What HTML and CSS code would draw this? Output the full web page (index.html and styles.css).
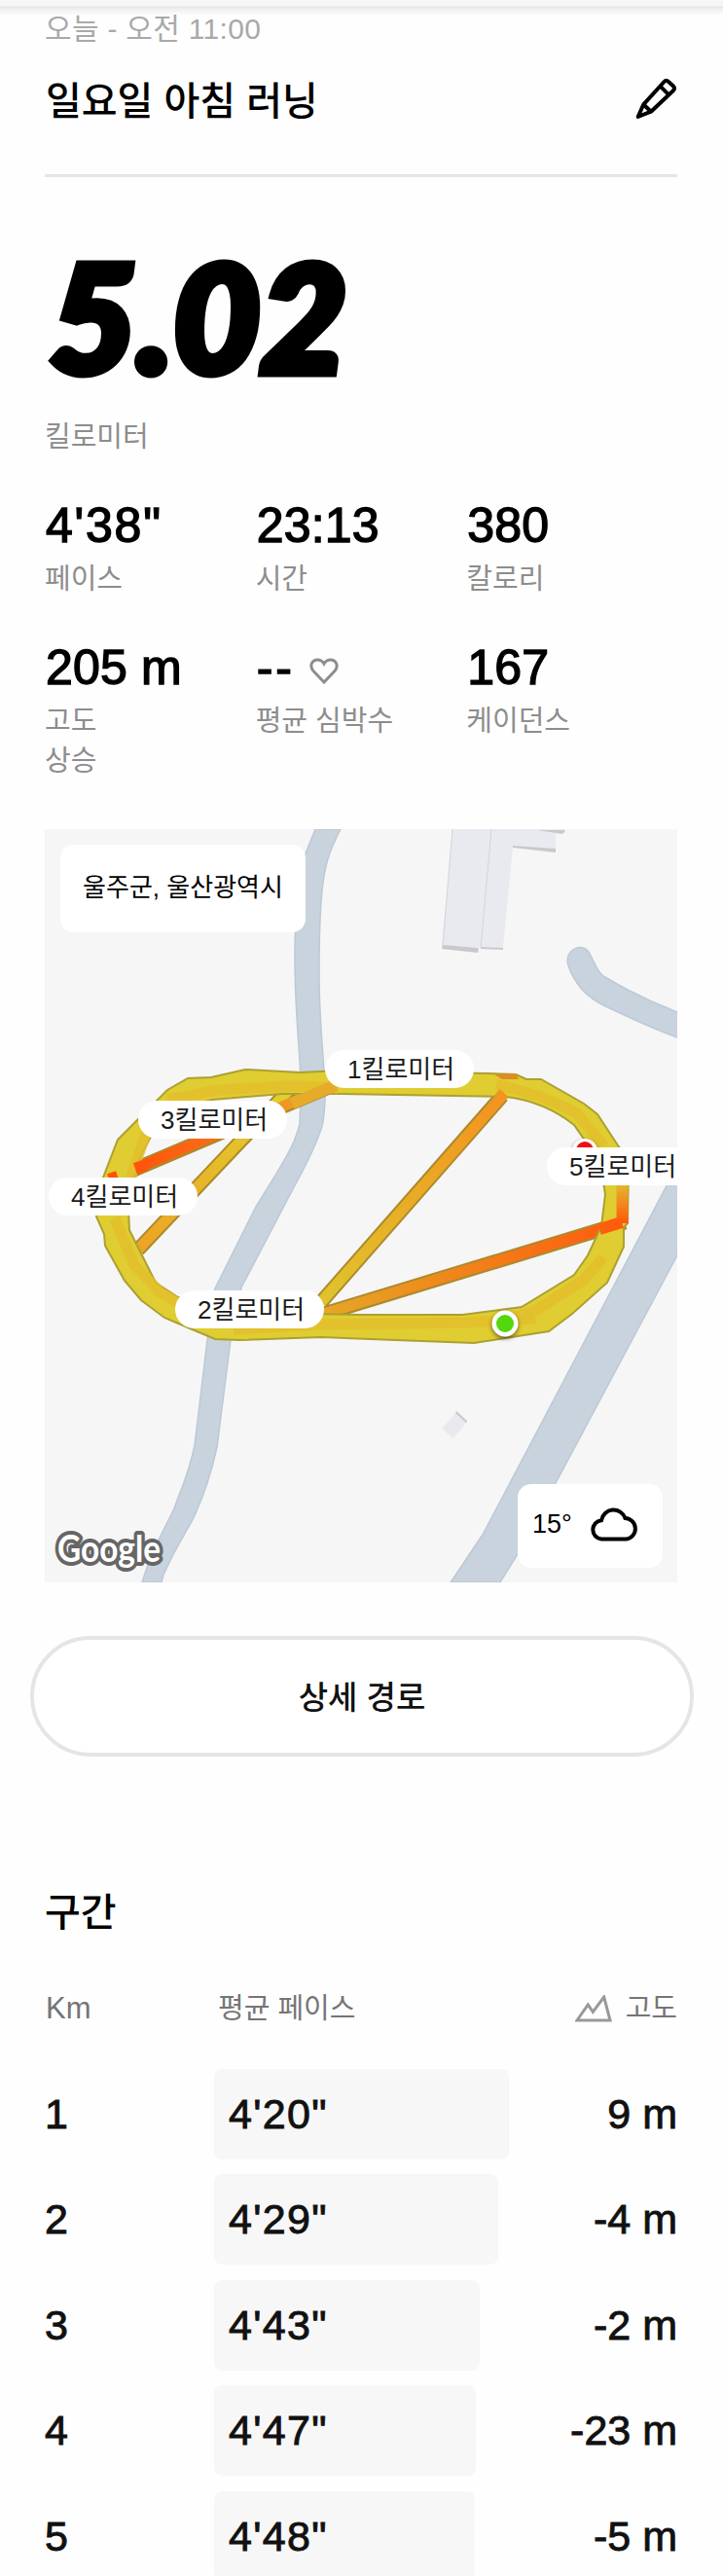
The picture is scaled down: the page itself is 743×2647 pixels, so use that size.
FILE: index.html
```
<!DOCTYPE html>
<html lang="ko">
<head>
    <meta charset="UTF-8">
    <meta name="viewport" content="width=device-width, initial-scale=1.0">
    <title>일요일 아침 러닝</title>
    <link rel="stylesheet" href="styles.css">
</head>
<body>
    <div class="top-bar"></div>
    <main class="container">
        <p class="date">오늘 - 오전 11:00</p>
        <header class="title-row">
            <h1>일요일 아침 러닝</h1>
            <svg class="edit-icon" viewBox="0 0 44 44">
                <path d="M3.700 40 L9.300 27.300 L30.500 4 Q32.700 1.500 35 4 L40 8.500 Q42 10.700 40 13 L17 34.700 Z M26.300 8.300 L35.300 17.300 M9.300 27.300 L17 34.700"/>
            </svg>
        </header>

        <section class="distance">
            <svg class="distance-value" viewBox="0 0 330 130">
                <text x="5" y="118.500" textLength="306" lengthAdjust="spacingAndGlyphs">5.02</text>
            </svg>
            <p class="label">킬로미터</p>
        </section>

        <section class="stats">
            <div class="stat">
                <div class="value pace">4'38"</div>
                <div class="label">페이스</div>
            </div>
            <div class="stat">
                <div class="value">23:13</div>
                <div class="label">시간</div>
            </div>
            <div class="stat">
                <div class="value">380</div>
                <div class="label">칼로리</div>
            </div>
            <div class="stat">
                <div class="value">205 m</div>
                <div class="label">고도<br>상승</div>
            </div>
            <div class="stat">
                <div class="value heart-rate">--
                    <svg class="heart-icon" viewBox="0 0 30 27">
                        <path d="M15 25 L4.500 14 C-1 8 3 2 8.500 2 C11.500 2 13.500 3.500 15 6 C16.500 3.500 18.500 2 21.500 2 C27 2 31 8 25.500 14 Z"/>
                    </svg>
                </div>
                <div class="label">평균 심박수</div>
            </div>
            <div class="stat">
                <div class="value">167</div>
                <div class="label">케이던스</div>
            </div>
        </section>

        <section class="map">
            <svg class="map-canvas" viewBox="46 852 650 774">
                <defs>
                    <linearGradient id="pace-a" gradientUnits="userSpaceOnUse" x1="517" y1="1125" x2="330" y2="1345">
                        <stop offset="0" stop-color="#f39320"/>
                        <stop offset="1" stop-color="#dfc42d"/>
                    </linearGradient>
                    <linearGradient id="pace-b" gradientUnits="userSpaceOnUse" x1="640" y1="1256" x2="330" y2="1350">
                        <stop offset="0" stop-color="#ff5a0d"/>
                        <stop offset="1" stop-color="#e5a727"/>
                    </linearGradient>
                    <linearGradient id="pace-c" gradientUnits="userSpaceOnUse" x1="135" y1="1203" x2="345" y2="1115">
                        <stop offset="0" stop-color="#ff5208"/>
                        <stop offset="0.45" stop-color="#f8701a"/>
                        <stop offset="1" stop-color="#e4b52b"/>
                    </linearGradient>
                    <linearGradient id="pace-d" gradientUnits="userSpaceOnUse" x1="300" y1="1125" x2="142" y2="1284">
                        <stop offset="0" stop-color="#dfd02f"/>
                        <stop offset="1" stop-color="#eda325"/>
                    </linearGradient>
                    <linearGradient id="pace-e" gradientUnits="userSpaceOnUse" x1="0" y1="1218" x2="0" y2="1256">
                        <stop offset="0" stop-color="#e5b52d"/>
                        <stop offset="1" stop-color="#ff5a0d"/>
                    </linearGradient>
                </defs>

                <!-- 하천 -->
                <g class="water">
                    <path d="M324 852 L314 877 C306 905 303 935 303 985 C303 1050 310 1090 309 1125 L308 1155 Q307 1160 302 1173 C295 1190 275 1220 263 1240 L221 1324 L213 1377 L200 1485 C194 1515 186 1530 179 1550 C167 1575 155 1595 146 1626 L166 1626 L168 1618 C185 1580 195 1570 201 1555 C210 1535 218 1510 223 1487 L237 1377 L248 1323 L302 1220 C313 1200 323 1180 329 1163 Q333 1155 334 1130 C334 1090 328 1060 328 1000 C328 960 329 935 331 915 C334 885 340 872 350 852 Z"/>
                    <path d="M710 1046 L696 1040 C670 1030 640 1015 620 1003 C612 997 609 983 604 977 C598 970 583 974 583 988 C585 998 589 1004 593 1010 C600 1021 610 1028 622 1034 C645 1045 670 1057 696 1066 L710 1072 Z"/>
                    <path d="M710 1171 L496 1577 L463 1626 L514 1626 L532 1597 L696 1290 L710 1265 Z"/>
                </g>

                <!-- 건물 -->
                <g class="building">
                    <path d="M465 852 L581 852 L581 856 L571 856 L571 872 L527 870 L517 974 L454 972 Z"/>
                    <path class="shade" d="M455 971 L492 974 L491 979 L454 975 Z M494 973 L517 974 L517 976 L494 975 Z M527 869 L571 872 L571 876 L527 871 Z M552 853 L581 853 L578 857 Z"/>
                    <path class="edge" d="M465 852 L455 972 M505 852 L494 974"/>
                    <path d="M469 1451 L480 1461 L466 1478 L454 1468 Z"/>
                    <path class="shade" d="M469 1450 L480 1460 L479 1462 L468 1452 Z"/>
                </g>

                <!-- 러닝 경로 -->
                <g class="cross-track">
                    <path class="outline" d="M142 1284 L297 1120 M135 1203 L345 1114 M516 1126 L330 1338 M330 1351 L642 1256"/>
                    <path stroke="url(#pace-d)" d="M140 1286 L297 1120"/>
                    <path stroke="url(#pace-c)" d="M110 1213 L345 1114"/>
                    <path stroke="url(#pace-a)" d="M518 1124 L330 1338"/>
                    <path stroke="url(#pace-b)" d="M326 1352 L642 1256"/>
                </g>
                <path class="loop" fill-rule="evenodd" d="M252 1099 L308 1102 L350 1100 L500 1103 L530 1104 L541 1109 L556 1109 L600 1134 L614 1145 L635 1177 L646 1192 L645 1257 L641 1261 L641 1281 L624 1318 L588 1350 L564 1368 L487 1380 L380 1376 L330 1374 L246 1377 L221 1376 L195 1365 L169 1354 L145 1336 L128 1316 L108 1280 L107 1268 L99 1250 L106 1210 L121 1171 L140 1152 L172 1120 L193 1108 L217 1107 Z M218 1130 L290 1124 L350 1124 L520 1127 Q560 1132 590 1156 L608 1182 L620 1215 L622 1227 L618 1260 L604 1290 L590 1310 L536 1343 L475 1351 L370 1351 L320 1350 L240 1357 L183 1333 L160 1318 L146 1290 L133 1264 L132 1243 L141 1195 L155 1168 L181 1140 Z"/>
                <g class="pace-band">
                    <path d="M172 1130 L225 1120 L300 1116 L348 1118"/>
                    <path d="M150 1165 L136 1205 L128 1240"/>
                    <path d="M118 1252 L138 1300 L165 1328 L195 1346"/>
                    <path d="M510 1114 L556 1127 L592 1143 L621 1178"/>
                    <path d="M620 1292 L600 1315 L550 1347 L520 1355"/>
                    <path d="M240 1366 L330 1361 L480 1359 L550 1355"/>
                </g>
                <path class="spot" stroke="url(#pace-c)" d="M139 1201 L150 1197 M112 1212 L121 1209"/>
                <path class="spot" stroke="url(#pace-b)" d="M616 1263 L639 1256"/>
                <path class="spot" stroke="url(#pace-e)" d="M639.500 1217 L639.600 1257"/>
                <path class="spot" stroke="#e5ab29" d="M300 1134 L345 1115"/>
                <path fill="#e08b25" d="M508 1104 L530 1103 L533 1109 L516 1109 Z"/>
                <path class="spot" stroke="url(#pace-a)" d="M518 1123 L512 1130"/>

                <circle class="marker" cx="601" cy="1183" r="13"/>
                <circle fill="#f00d18" cx="601" cy="1182" r="9"/>
                <circle class="marker" cx="519" cy="1360" r="13.500"/>
                <circle fill="#52d80c" cx="519" cy="1360" r="9"/>

                <text class="google" x="59" y="1605" textLength="106" lengthAdjust="spacingAndGlyphs">Google</text>
            </svg>
            <div class="place">울주군, 울산광역시</div>
            <span class="pin km1">1킬로미터</span>
            <span class="pin km2">2킬로미터</span>
            <span class="pin km3">3킬로미터</span>
            <span class="pin km4">4킬로미터</span>
            <span class="pin km5">5킬로미터</span>
            <div class="weather">
                <span>15°</span>
                <svg class="cloud-icon" viewBox="0 0 50 36">
                    <path d="M12 33.500 A9.700 9.700 0 0 1 12 14.200 A12.700 12.700 0 0 1 36.500 12 A10.800 10.800 0 0 1 37.500 33.500 Z"/>
                </svg>
            </div>
        </section>

        <button class="route-button">상세 경로</button>

        <section class="splits">
            <h2>구간</h2>
            <div class="split-head">
                <span class="km-head">Km</span>
                <span>평균 페이스</span>
                <span class="elevation-head">
                    <svg class="mountain-icon" viewBox="0 0 38 28">
                        <path d="M2 26 L13.300 10 L18.300 17.300 L29.700 2 L36 26 Z"/>
                    </svg>
                    고도
                </span>
            </div>
            <div class="split"><span>1</span><div class="track"><div class="bar" style="width: 303px">4'20"</div></div><span>9 m</span></div>
            <div class="split"><span>2</span><div class="track"><div class="bar" style="width: 292px">4'29"</div></div><span>-4 m</span></div>
            <div class="split"><span>3</span><div class="track"><div class="bar" style="width: 273px">4'43"</div></div><span>-2 m</span></div>
            <div class="split"><span>4</span><div class="track"><div class="bar" style="width: 269px">4'47"</div></div><span>-23 m</span></div>
            <div class="split"><span>5</span><div class="track"><div class="bar" style="width: 268px">4'48"</div></div><span>-5 m</span></div>
        </section>
    </main>
</body>
</html>
```

FILE: styles.css
```
* {
    box-sizing: border-box;
}
body {
    margin: 0;
    height: 2647px;
    overflow: hidden;
    background-color: #fefefe;
    color: #000;
    font-family: "Liberation Sans", "Noto Sans CJK KR", sans-serif;
}
h1, h2, p {
    margin: 0;
}
svg {
    display: block;
}
.top-bar {
    height: 16px;
    background: linear-gradient(#f7f7f7 0, #f6f6f6 6px, #e6e6e6 7px, #f1f1f1 10px, #fefefe 16px);
}
.container {
    padding: 0 47px 0 46px;
}
.date {
    height: 24px;
    line-height: 28px;
    font-size: 30px;
    letter-spacing: 0.3px;
    color: #a9a9a9;
}
.title-row {
    display: flex;
    justify-content: space-between;
    align-items: center;
    height: 142px;
    padding-bottom: 12px;
    border-bottom: 3px solid #e5e5e5;
}
h1, h2 {
    font-size: 40px;
    font-weight: 500;
    line-height: 60px;
}
h1 {
    padding-left: 1px;
}
.edit-icon {
    width: 44px;
    height: 44px;
    margin-bottom: 3px;
    fill: none;
    stroke: #000;
    stroke-width: 4;
    stroke-linejoin: round;
}
.distance {
    padding-top: 82px;
}
.distance-value {
    width: 330px;
    height: 130px;
    overflow: visible;
}
.distance-value text {
    font-family: Lato, sans-serif;
    font-size: 152px;
    font-weight: 900;
    font-style: italic;
    stroke: #000;
    stroke-width: 9;
}
.label {
    font-size: 29px;
    line-height: 41px;
    color: #8d8d8d;
}
.distance .label {
    margin-top: 35px;
}
.stats {
    display: grid;
    grid-template-columns: repeat(3, 1fr);
    height: 382px;
    padding-top: 42px;
    grid-auto-rows: 145.500px;
}
.value {
    display: flex;
    align-items: center;
    height: 56px;
    padding-left: 1px;
    font-size: 50px;
    letter-spacing: 0.2px;
    -webkit-text-stroke: 1.4px #000;
}
.value.pace {
    letter-spacing: 1.8px;
}
.value.heart-rate {
    gap: 15px;
    letter-spacing: 3px;
}
.stats .label {
    margin-top: 7px;
}
.heart-icon {
    width: 30px;
    height: 27px;
    margin-top: 8px;
    fill: none;
    stroke: #8d8d8d;
    stroke-width: 3;
}
.map {
    position: relative;
    width: 650px;
    height: 774px;
    overflow: hidden;
    background-color: #f6f6f6;
}
.map-canvas {
    width: 650px;
    height: 774px;
}
.water path {
    fill: #c8d3dd;
    stroke: #bcc9d6;
    stroke-width: 1.5;
}
.building {
    fill: #e9eaf0;
}
.building .shade {
    fill: #c9c9cb;
}
.building .edge {
    fill: none;
    stroke: #d3d3da;
    stroke-width: 1;
}
.cross-track path {
    fill: none;
    stroke-width: 11;
}
.cross-track .outline {
    stroke: #ac8a2c;
    stroke-width: 15;
}
.loop {
    fill: #dfcd31;
    stroke: #aca032;
    stroke-width: 2;
}
.pace-band path {
    fill: none;
    stroke: #e2be2d;
    stroke-width: 11;
    stroke-linejoin: round;
    opacity: 0.8;
}
.spot {
    fill: none;
    stroke-width: 12;
}
.marker {
    fill: #fff;
    filter: drop-shadow(0 2px 2px rgba(0, 0, 0, 0.5));
}
.google {
    font-family: Lato, sans-serif;
    font-size: 38px;
    font-weight: 700;
    fill: #fff;
    stroke: #666;
    stroke-width: 8;
    stroke-linejoin: round;
    paint-order: stroke;
}
.place, .pin, .weather {
    position: absolute;
    background-color: #fff;
    white-space: nowrap;
}
.place {
    left: 16px;
    top: 16px;
    width: 252px;
    height: 90px;
    border-radius: 14px;
    line-height: 88px;
    text-align: center;
    font-size: 26px;
}
.pin {
    width: 153px;
    height: 39px;
    border-radius: 20px;
    line-height: 40px;
    padding-left: 23px;
    font-size: 26px;
    color: #1a1a1a;
}
.km1 {
    left: 288px;
    top: 227px;
}
.km2 {
    left: 134px;
    top: 474px;
}
.km3 {
    left: 96px;
    top: 279px;
}
.km4 {
    left: 4px;
    top: 358px;
}
.km5 {
    left: 516px;
    top: 327px;
}
.weather {
    left: 486px;
    top: 673px;
    width: 149px;
    height: 86px;
    border-radius: 14px;
    display: flex;
    align-items: center;
    justify-content: space-between;
    padding: 0 25px 4px 15px;
    font-size: 27px;
}
.cloud-icon {
    width: 50px;
    height: 36px;
    fill: none;
    stroke: #000;
    stroke-width: 4;
}
.route-button {
    display: block;
    width: 682px;
    height: 124px;
    margin: 55px 0 0 -15px;
    padding-bottom: 4px;
    border: 4px solid #e5e5e5;
    border-radius: 62px;
    background-color: #fff;
    color: #111;
    font-family: inherit;
    font-size: 33px;
    font-weight: 500;
}
.splits {
    padding-top: 130px;
}
.split-head {
    display: grid;
    grid-template-columns: 178px 1fr auto;
    height: 44px;
    margin-top: 47px;
    margin-bottom: 40px;
    line-height: 44px;
    font-size: 29px;
    color: #757575;
}
.km-head {
    padding-left: 1px;
    font-size: 31px;
}
.elevation-head {
    display: flex;
    align-items: center;
    gap: 14px;
}
.mountain-icon {
    width: 38px;
    height: 28px;
    fill: none;
    stroke: #999;
    stroke-width: 3;
}
.split {
    display: grid;
    grid-template-columns: 174px 1fr auto;
    align-items: center;
    height: 93px;
    margin-bottom: 15.400px;
    font-size: 43px;
    color: #111;
    -webkit-text-stroke: 0.9px #111;
}
.bar {
    height: 93px;
    border-radius: 8px;
    background-color: #f7f7f7;
    padding-left: 15px;
    line-height: 93px;
    letter-spacing: 1.300px;
}
```
